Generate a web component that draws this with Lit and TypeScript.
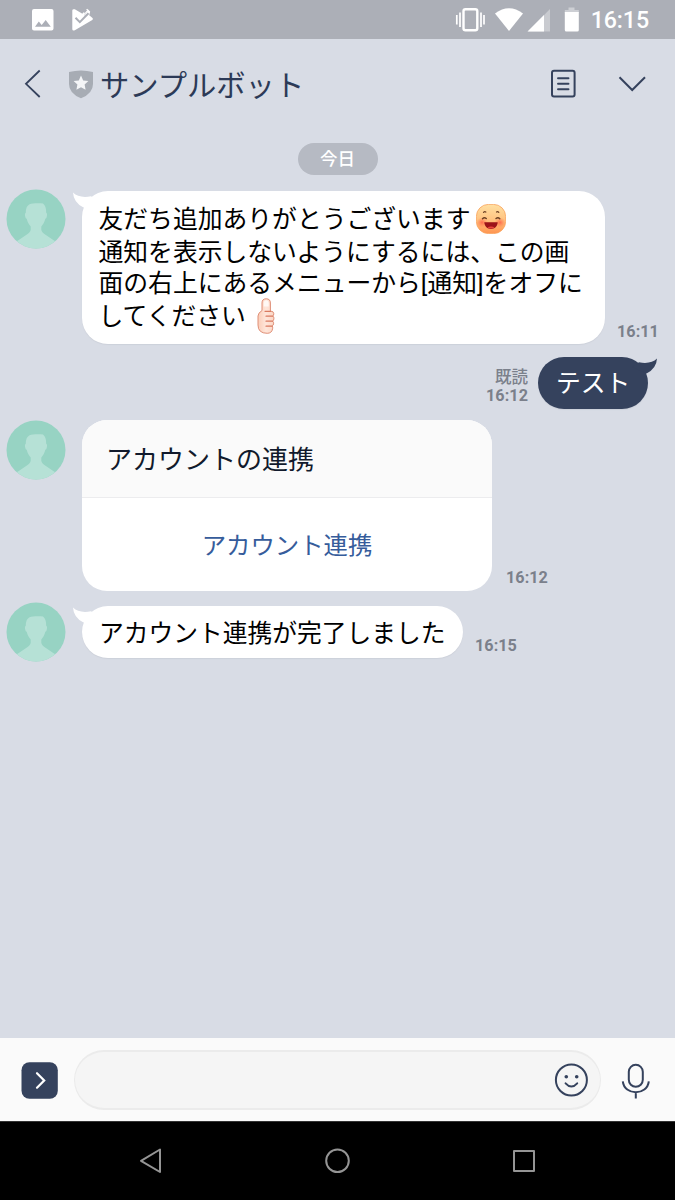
import { LitElement, html, css, svg, SVGTemplateResult } from "lit";
import { customElement } from "lit/decorators.js";

const icon = (cls: string, box: string, body: SVGTemplateResult) => {
  const [, , w, h] = box.split(" ");
  return html`<svg class=${cls} width=${w} height=${h} viewBox=${box} aria-hidden="true">${body}</svg>`;
};

const avatar = () => icon("avatar", "0 0 60 60", svg`
  <defs><clipPath id="c"><circle cx="30" cy="30" r="29.5"/></clipPath></defs>
  <circle cx="30" cy="30" r="29.5" fill="#97d3c3"/>
  <path clip-path="url(#c)" fill="#b6e1d6" d="M27 14.500C30 14 33.500 14 37 14.500C39.500 16.500 40.200 19.500 40.200 23.800C41.200 24.200 41.200 26 40.800 27.500C40.500 29 40 29.700 39.300 29.800C38.500 33 37.300 35.500 35.300 37.500V41C36 43 37.500 44.500 39.500 45.800L49.500 52.500V60H10.500V52.500L20.500 45.800C22.500 44.500 24 43 24.700 41V37.500C22.700 35.500 21.500 33 20.700 29.800C20 29.700 19.500 29 19.200 27.500C18.800 26 18.800 24.200 19.800 23.800C19.800 18.500 21.500 14.800 27 14.500z"/>`);

const laugh = () => icon("emoji laugh", "0 0 30 30", svg`
  <defs>
    <linearGradient id="f" x1="0" y1="0" x2="0" y2="1"><stop offset="0" stop-color="#ffe0a2"/><stop offset=".5" stop-color="#ffc583"/><stop offset="1" stop-color="#ff9450"/></linearGradient>
    <radialGradient id="k"><stop offset="0" stop-color="#ff6048" stop-opacity=".85"/><stop offset="1" stop-color="#ff7550" stop-opacity="0"/></radialGradient>
  </defs>
  <rect x=".4" y=".4" width="29.200" height="29.200" rx="12" fill="url(#f)" stroke="#f9a25a" stroke-width=".8"/>
  <ellipse cx="6" cy="18.500" rx="5.500" ry="5" fill="url(#k)"/><ellipse cx="24" cy="18.500" rx="5.500" ry="5" fill="url(#k)"/>
  <g fill="none" stroke="#6d4024" stroke-width="1.200" stroke-linecap="round"><path d="M7.500 8.300q1.200-1.200 2.300-.3M20.500 8q1.200-.9 2.300.3"/><path stroke-width="1.400" d="M6.500 14.700q1.800-1.900 3.800-.2M20 14.500q2-1.700 3.800.2"/></g>
  <path d="M8.300 18.200h13.400c-.2 4.200-3.200 6.700-6.700 6.700s-6.500-2.500-6.700-6.700z" fill="#9c1219"/>
  <path d="M11.500 23.300q3.500-1.800 7 0-1.300 1.300-3.500 1.300t-3.500-1.300z" fill="#e8453c"/>`);

const thumb = () => icon("emoji thumb", "0 0 18 36", svg`
  <defs><linearGradient id="t" x1="0" x2="1"><stop offset="0" stop-color="#fbcdb8"/><stop offset=".5" stop-color="#ffe6da"/><stop offset="1" stop-color="#fbd6c5"/></linearGradient></defs>
  <path d="M5 5Q5 .8 9.200 .8T13.400 5v8q3.400.2 3.400 2.700 0 1.500-1 2.300 1.300.9 1.100 2.800-.1 1.600-1.300 2.300 1.200.9 1 2.700-.2 1.600-1.500 2.200.9.900.5 2.800-.8 4.500-5.400 4.500Q1 35.300 1 27v-9q0-3 4-5.500z" fill="url(#t)" stroke="#df8f77" stroke-width="1"/>
  <path d="M8 13.300h5.500M9 18.200h6.500M9 23.200h6.500M9 28.200h6" fill="none" stroke="#d97a60" stroke-width="1.200" stroke-linecap="round"/>
  <path d="M6.700 5q.2-2.700 2.500-2.700T11.700 5v3.500h-5z" fill="#fff8f4"/>`);

@customElement("app-root")
export class AppRoot extends LitElement {
  static styles = css`
    :host { display: flex; flex-direction: column; width: 675px; height: 1200px; overflow: hidden; background: #d8dce5; color: #000; font-family: "Noto Sans CJK JP", sans-serif; }
    * { box-sizing: border-box; }
    svg { display: block; flex: none; }
    .status { height: 39px; flex: none; background: #acafb7; display: flex; align-items: center; color: #fff; padding-right: 26px; }
    .clock { font: 500 23.200px/39px Roboto, sans-serif; padding-top: 2px; margin-left: 5px; letter-spacing: -.1px; }
    .grow { flex: 1; }
    .header { height: 91px; flex: none; display: flex; align-items: center; color: #2c3a57; }
    .title { font-size: 29.300px; line-height: 40px; margin: 0; font-weight: 400; padding-bottom: 4px; }
    .chat { flex: 1; display: flex; flex-direction: column; align-items: flex-start; }
    .date { align-self: center; margin-top: 13px; height: 32px; width: 80px; border-radius: 16px; background: #b6bac3; color: #fff; text-align: center; font-size: 17.500px; font-weight: 500; line-height: 30px; }
    .row { display: flex; align-items: flex-end; padding-left: 6px; }
    .avatar { align-self: flex-start; margin-right: 16px; }
    .r1 { margin-top: 14px; }
    .r2 { align-self: flex-end; margin: 13px 27px 0 0; }
    .r3 { margin-top: 10.500px; }
    .r4 { margin-top: 11px; }
    .bubble { position: relative; background: #fff; border-radius: 26px; font-size: 24.750px; white-space: nowrap; box-shadow: 0 1px 1px #cdd1da; }
    .tail { position: absolute; left: -9px; top: 1px; overflow: visible; }
    .mine .tail { left: auto; right: -9px; }
    .long { width: 523px; height: 153px; margin-top: 2px; padding: 12px 0 0 16.500px; font-family: Roboto, "Noto Sans CJK JP", sans-serif; font-size: 24.800px; }
    .line { display: flex; align-items: center; line-height: 30px; }
    .a { height: 33px; } .b { height: 34px; } .c { height: 28px; } .d { height: 38px; }
    .laugh { margin: -2px 0 0 5.500px; }
    .thumb { margin: -3px 0 0 11.500px; }
    .time { font: 700 16.200px/20px Roboto, sans-serif; color: #7b808b; letter-spacing: .05px; }
    .r1 .time { margin: 0 0 2px 12px; }
    .read { font-size: 16.500px; line-height: 20px; font-weight: 500; color: #7b808b; }
    .meta { display: flex; flex-direction: column; align-items: flex-end; margin: 0 10px 3px 0; }
    .mine { background: #35425d; color: #fff; width: 110px; height: 52px; line-height: 49px; padding-left: 18px; }
    .card { width: 410px; height: 171px; background: #fff; border-radius: 25px; overflow: hidden; }
    .cardtitle { height: 78px; background: #fafafa; border-bottom: 1px solid #ececee; font-size: 26px; line-height: 76px; padding-left: 24px; color: #111a2c; }
    .cardlink { height: 93px; text-align: center; color: #365c9b; font-size: 24.400px; line-height: 91px; }
    .r3 .time { margin: 0 0 3px 14px; }
    .done { width: 381px; height: 52px; line-height: 50px; margin-bottom: 3.500px; padding-left: 17px; }
    .r4 .time { margin: 0 0 6px 12px; }
    .composer { height: 83px; flex: none; background: #fafafa; display: flex; align-items: center; padding: 1px 19px 0 19px; }
    .field { width: 527px; height: 60px; margin-left: 14px; border: solid #ebebeb; border-width: 2px 1px; border-radius: 30px; background: #f5f5f5; display: flex; align-items: center; justify-content: flex-end; padding-right: 9px; }
    .mic { margin-left: 14px; }
    .nav { height: 79px; flex: none; background: #000; border-top: 1px solid #333; }
  `;

  render() {
    return html`
      <div class="status">
        ${icon("", "0 0 110 39", svg`<g fill="#fff"><path fill-rule="evenodd" d="M34 9h17.500q2 0 2 2v17.500q0 2-2 2H34q-2 0-2-2V11q0-2 2-2zM35 26.700h15.800l-5.100-6.700-4 5-2.900-3.400z"/><path d="M74.800 9.300l7.200 4.200 2.500 2 3.700-5.700 2 1.700-1 3.800 3.300 2.700q1 1-.2 2L74.800 30.200q-2.300 1-2.500-1V10.500q.1-1.800 2.500-1.200z"/><path d="M75.500 17.800l4.300 4.300 8.700-8.900" fill="none" stroke="#acafb7" stroke-width="2"/><path d="M80.200 17.500l7.800-8" fill="none" stroke="#fff" stroke-width="2.400"/><path d="M83.500 9.500l1 4 2.800-3.500z" fill="#acafb7"/></g>`)}
        <div class="grow"></div>
        ${icon("", "450 0 135 39", svg`<g fill="none" stroke="#fff"><rect x="462.500" y="9.300" width="13.800" height="20.900" rx="2" stroke-width="2.400"/><path d="M459 12.500v14.500M455.800 15v9.500M480 12.500v14.500M483 15v9.500" stroke-width="1.700"/></g><path fill="#fff" d="M494 13.400Q508 3 522 13.400L508 31z"/><path fill="#fff" fill-opacity=".35" d="M549 9v22.500h-22z"/><path fill="#fff" d="M543 15.100v16.400h-16.500z"/><path fill="#fff" fill-opacity=".4" d="M567.500 7.500h6V10h4.300v3h-14v-3h3.700z"/><path fill="#fff" d="M563.800 12h14v18q0 1.500-1.500 1.500h-11q-1.500 0-1.500-1.500z"/>`)}
        <span class="clock">16:15</span>
      </div>
      <div class="header">
        ${icon("", "0 39 100 91", svg`<path d="M39.700 70.500L26 83.800l13.700 13.200" fill="none" stroke="#35425d" stroke-width="1.800"/><path fill="#a7acb4" d="M69 72q12-3 24 0V84q0 9.500-12 14.300Q69 93.500 69 84z"/><path fill="#f4f5f7" d="M81 75.500l2.200 4.900 5.200.6-3.800 3.600 1 5.200-4.600-2.600-4.600 2.600 1-5.200-3.800-3.600 5.200-.6z"/>`)}
        <h1 class="title">サンプルボット</h1>
        <div class="grow"></div>
        ${icon("", "540 39 135 91", svg`<g fill="none" stroke="#35425d"><rect x="552" y="70.800" width="22.600" height="25.800" rx="2" stroke-width="2"/><path d="M558 78.200h10.500M558 83.700h10.500M558 89.200h10.500" stroke-width="1.900" stroke-linecap="round"/><path d="M619.500 77.200L632.200 90 645 77.200" stroke-width="2"/></g>`)}
      </div>
      <div class="chat">
        <div class="date">今日</div>
        <div class="row r1">${avatar()}
          <div class="bubble long">${this.tail()}
            <div class="line a">友だち追加ありがとうございます${laugh()}</div>
            <div class="line b">通知を表示しないようにするには、この画</div>
            <div class="line c">面の右上にあるメニューから[通知]をオフに</div>
            <div class="line d">してください${thumb()}</div>
          </div>
          <span class="time">16:11</span>
        </div>
        <div class="row r2">
          <div class="meta"><span class="read">既読</span><span class="time">16:12</span></div>
          <div class="bubble mine">${icon("tail", "0 0 17 15", svg`<path fill="#35425d" d="M17 .5Q16.500 10.500 6.500 15.500L-8 9L-1 4.300Q11 6.500 17 .5z"/>`)}テスト</div>
        </div>
        <div class="row r3">${avatar()}
          <div class="card"><div class="cardtitle">アカウントの連携</div><div class="cardlink">アカウント連携</div></div>
          <span class="time">16:12</span>
        </div>
        <div class="row r4">${avatar()}
          <div class="bubble done">${this.tail()}アカウント連携が完了しました</div>
          <span class="time">16:15</span>
        </div>
      </div>
      <div class="composer">
        ${icon("", "19 1060 41 41", svg`<rect x="21.500" y="1062.200" width="36.300" height="36.600" rx="8" fill="#35425d"/><path d="M37 1073.200l7.200 7.200-7.200 7.300" fill="none" stroke="#fff" stroke-width="2.200" stroke-linecap="round"/>`)}
        <div class="field">${icon("", "551 1060 40 40", svg`<g fill="none" stroke="#35425d" stroke-width="2"><circle cx="571.400" cy="1080" r="15.500"/><path d="M565.600 1083.300q5.800 6.500 11.600 0" stroke-linecap="round"/></g><g fill="#35425d"><circle cx="566.300" cy="1076.800" r="1.800"/><circle cx="576.700" cy="1076.800" r="1.800"/></g>`)}</div>
        ${icon("mic", "615 1060 41 41", svg`<g fill="none" stroke="#35425d" stroke-width="2"><rect x="628.800" y="1064.800" width="14" height="22" rx="7"/><path d="M622.800 1081.300c1.500 14.500 24.500 14.500 26 0M635.800 1092.300v6.200"/></g>`)}
      </div>
      <div class="nav">${icon("", "0 1122 675 78", svg`<g fill="none" stroke="#959595" stroke-width="2" stroke-linejoin="round"><path d="M160 1149.500v22.500l-19-11.200z"/><circle cx="337.500" cy="1160.700" r="11.300"/><rect x="514" y="1151" width="20" height="20"/></g>`)}</div>
    `;
  }

  tail() {
    return icon("tail", "0 0 17 15", svg`<path fill="#fff" d="M0 .5Q.5 10.500 10.500 15.500L25 9L18 4.300Q6 6.500 0 .5z"/>`);
  }
}
